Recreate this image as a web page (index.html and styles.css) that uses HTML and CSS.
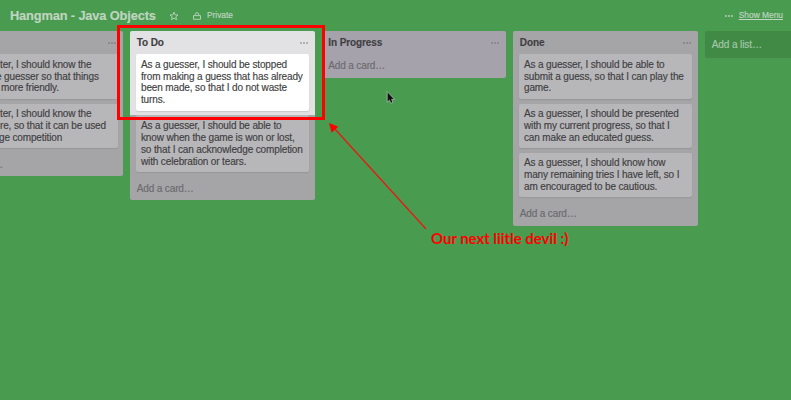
FILE: index.html
```html
<!DOCTYPE html>
<html lang="en">
<head>
<meta charset="utf-8">
<title>Hangman - Java Objects</title>
<link rel="stylesheet" href="styles.css">
</head>
<body>
<header class="bar">
  <h1 class="title">Hangman - Java Objects</h1>
  <svg class="star" viewBox="0 0 10 10"><path d="M5 1.1 6.1 3.8 9 4 6.8 5.8 7.5 8.7 5 7.1 2.5 8.7 3.2 5.8 1 4 3.9 3.8Z"/></svg>
  <svg class="lock" viewBox="0 0 10 10"><path d="M1.5 4.6H8.5V8.3H1.5ZM3.3 4.5V3.2Q3.3 1.7 5 1.7T6.7 3.2V4.5"/></svg>
  <span class="private">Private</span>
  <i class="dots menu-dots"></i>
  <a class="menu">Show Menu</a>
</header>
<main class="board">
  <section class="list first">
    <header class="head"><h2></h2><i class="dots"></i></header>
    <div class="cards">
      <article class="card cut"><p>ter, I should know the</p><p class="out">e guesser so that things</p><p class="in">more friendly.</p></article>
      <article class="card cut"><p>ter, I should know the</p><p>re, so that it can be used</p><p class="near">ge competition</p></article>
    </div>
    <footer class="add">…</footer>
  </section>
  <section class="list lit">
    <header class="head"><h2>To Do</h2><i class="dots"></i></header>
    <div class="cards">
      <article class="card bright">As a guesser, I should be stopped<br>from making a guess that has already<br>been made, so that I do not waste<br>turns.</article>
      <article class="card">As a guesser, I should be able to<br>know when the game is won or lost,<br>so that I can acknowledge completion<br>with celebration or tears.</article>
    </div>
    <footer class="add">Add a card…</footer>
  </section>
  <section class="list progress">
    <header class="head"><h2>In Progress</h2><i class="dots"></i></header>
    <footer class="add">Add a card…</footer>
  </section>
  <section class="list">
    <header class="head"><h2>Done</h2><i class="dots"></i></header>
    <div class="cards">
      <article class="card">As a guesser, I should be able to<br>submit a guess, so that I can play the<br>game.</article>
      <article class="card">As a guesser, I should be presented<br>with my current progress, so that I<br>can make an educated guess.</article>
      <article class="card">As a guesser, I should know how<br>many remaining tries I have left, so I<br>am encouraged to be cautious.</article>
    </div>
    <footer class="add">Add a card…</footer>
  </section>
  <section class="new-list">Add a list…</section>
</main>
<div class="frame"></div>
<svg class="overlay" viewBox="0 0 791 400">
  <path class="shaft" d="M426 229 334 128"/>
  <path class="tip" d="M329 123 338.3 126.8 331.6 132.8Z"/>
  <path class="cursor" d="M387.2 91.5V102.3L389.4 100.2 391 103.3 393 102.4 391.6 99.4H394.6Z"/>
</svg>
<div class="note">Our next liitle devil :)</div>
</body>
</html>
```
FILE: styles.css
```css
* { box-sizing: border-box; }
body {
  margin: 0;
  width: 791px;
  height: 400px;
  overflow: hidden;
  background: #499b50;
  color: #3f3f42;
  font: 10px/11.85px "Liberation Sans", Arial, sans-serif;
  letter-spacing: -0.14px;
  -webkit-text-stroke: 0.15px currentColor;
}
h1, h2, p { margin: 0; }
.bar {
  display: flex;
  align-items: center;
  height: 31px;
  padding: 0 8px 0 10px;
  color: #c0d5c1;
}
.title { font-size: 12.8px; line-height: 16px; letter-spacing: -0.13px; white-space: nowrap; width: 145px; }
.star, .lock { width: 10px; height: 10px; fill: none; stroke: #b4cfb5; stroke-width: 1; }
.star { margin-left: 14px; }
.lock { margin-left: 13px; }
.private { margin-left: 5px; font-size: 8.3px; letter-spacing: 0; }
.menu { margin-left: 6px; font-size: 8.4px; letter-spacing: 0; text-decoration: underline; }
.dots {
  width: 8px;
  height: 2px;
  background: repeating-linear-gradient(90deg, #8c8b8f 0 2px, transparent 2px 3px);
}
.menu-dots { margin-left: auto; background: repeating-linear-gradient(90deg, #97bf99 0 2px, transparent 2px 3px); }
.lit .dots { background: repeating-linear-gradient(90deg, #b2b2b6 0 2px, transparent 2px 3px); }
.board {
  display: flex;
  align-items: flex-start;
  gap: 7px;
  width: 791px;
}
.list {
  flex: none;
  width: 184.5px;
  border-radius: 2px;
  background: #a5a4a7;
}
.lit { background: linear-gradient(#e2e2e4 0 84.5px, #a5a4a7 84.5px); }
.progress { background: #a6a2ab; }
.head {
  display: flex;
  align-items: center;
  justify-content: space-between;
  height: 23.3px;
  padding: 0 7px 0 6.5px;
}
.head h2 { font-size: 10px; line-height: 12px; letter-spacing: -0.1px; }
.cards {
  display: flex;
  flex-direction: column;
  gap: 4.8px;
  padding: 0 5.7px 4.8px;
}
.card {
  padding: 4.5px 0 4.5px 5px;
  border-radius: 2px;
  background: #b7b6b9;
  box-shadow: 0 1px 1px #97969a;
  white-space: nowrap;
}
.bright { background: #fff; box-shadow: 0 1px 1px #c9c9cd; }
.first { width: 123.3px; border-radius: 0 2px 2px 0; }
.first .cards { padding-left: 0; }
.first .add { padding-left: 0; text-indent: -7px; }
.cut { padding-left: 0; border-radius: 0 2px 2px 0; }
.out { text-indent: -4px; }
.in { padding-left: 1px; }
.near { text-indent: -1px; }
.add {
  height: 23.3px;
  padding: 6px 6.5px 0;
  color: #6b6a6e;
}
.new-list {
  flex: 1;
  height: 27px;
  padding: 8px 7px;
  border-radius: 2px 0 0 2px;
  background: #408a46;
  color: #a9c9ab;
  letter-spacing: -0.1px;
}
.frame {
  position: absolute;
  left: 117px;
  top: 25px;
  width: 208px;
  height: 95px;
  border: 3px solid #f00;
}
.overlay { position: absolute; left: 0; top: 0; width: 791px; height: 400px; }
.shaft { stroke: #f01410; stroke-width: 1.2; }
.tip { fill: #f00; }
.cursor { fill: #111; stroke: #b9c9ba; stroke-width: 0.7; }
.note {
  position: absolute;
  left: 431px;
  top: 228px;
  font: bold 15px/20px Lato, sans-serif;
  letter-spacing: -0.05px;
  -webkit-text-stroke: 0;
  color: #f00;
  white-space: nowrap;
}
```
